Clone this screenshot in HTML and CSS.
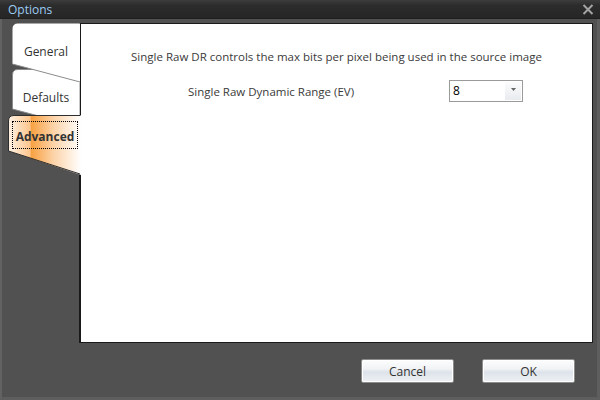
FILE: index.html
```
<!DOCTYPE html>
<html>
<head lang="en">
    <meta charset="UTF-8">
    <title>Options</title>
    <link rel="stylesheet" href="styles.css">
</head>
<body>
    <div class="window">
        <div class="titlebar">
            <span class="title">Options</span>
            <svg class="close" width="12" height="11" viewBox="0 0 12 11">
                <path d="M1.5,1 L10.5,10 M10.5,1 L1.5,10" stroke="#a3a3a3" stroke-width="2"/>
            </svg>
        </div>
        <div class="main">
            <div class="tabs">
                <div class="tab general">
                    <svg class="shape" width="68" height="59" viewBox="0 0 68 59">
                        <path d="M0.5,59 V6 Q0.5,0.5 6,0.5 H68 V59 L0.5,41 Z" fill="#fff"/>
                        <path d="M0.5,41 L68,59" stroke="#8c8c8c" fill="none"/>
                    </svg>
                    <span class="label">General</span>
                </div>
                <div class="tab defaults">
                    <svg class="shape" width="68" height="58" viewBox="0 0 68 58">
                        <path d="M0.5,40 V6 Q0.5,0.5 6,0.5 H68 V58 Z" fill="#fff" stroke="#8c8c8c"/>
                    </svg>
                    <span class="label">Defaults</span>
                </div>
                <div class="tab advanced">
                    <svg class="shape" width="73" height="60" viewBox="0 0 73 60">
                        <defs>
                            <linearGradient id="adv" x1="0" y1="0" x2="1" y2="0">
                                <stop offset="0" stop-color="#fff3e6"/>
                                <stop offset="0.3" stop-color="#fcc58c"/>
                                <stop offset="0.31" stop-color="#f8a040"/>
                                <stop offset="0.62" stop-color="#fcd3a8"/>
                                <stop offset="1" stop-color="#ffffff"/>
                            </linearGradient>
                        </defs>
                        <path d="M0.5,36 V6 Q0.5,0.5 6,0.5 H73 V60 Z" fill="url(#adv)"/>
                        <path d="M72,0.5 H6 Q0.5,0.5 0.5,6 V36 L72,59" stroke="#2e2e2e" fill="none"/>
                    </svg>
                    <span class="label focus">Advanced</span>
                </div>
            </div>
            <div class="panel">
                <p class="info">Single Raw DR controls the max bits per pixel being used in the source image</p>
                <div class="row">
                    <span class="field">Single Raw Dynamic Range (EV)</span>
                    <div class="combo">
                        <span class="value">8</span>
                        <span class="drop">
                            <svg width="5" height="3" viewBox="0 0 5 3"><path d="M0,0 H5 L2.5,3 Z" fill="#666"/></svg>
                        </span>
                    </div>
                </div>
            </div>
        </div>
        <div class="footer">
            <button class="btn">Cancel</button>
            <button class="btn">OK</button>
        </div>
    </div>
</body>
</html>
```

FILE: styles.css
```
*{
    box-sizing: border-box;
}
body{
    margin: 0;
    width: 600px;
    height: 400px;
    overflow: hidden;
    font-family: "Open Sans", "Noto Sans", sans-serif;
    font-size: 11.5px;
    color: #333;
}
.window{
    width: 600px;
    height: 400px;
    background: #515151;
    border-left: 2px solid #626262;
    border-right: 3px solid #5e5e5e;
    border-bottom: 3px solid #5e5e5e;
}
.titlebar{
    display: flex;
    justify-content: space-between;
    align-items: center;
    height: 19px;
    margin-left: -2px;
    margin-right: -3px;
    padding: 0 6px 0 8px;
    background: linear-gradient(#3c3c3c, #2c2c2c 30%, #262626);
    border-bottom: 1px solid #1f1f1f;
}
.title{
    color: #9ccbf2;
    font-size: 12px;
}
.close{
    margin-top: 1px;
}
.main{
    display: flex;
    margin-top: 4px;
    height: 320px;
}
.tabs{
    position: relative;
    z-index: 2;
    width: 78px;
    padding-left: 6px;
    display: flex;
    flex-direction: column;
}
.tab{
    position: relative;
    display: flex;
    justify-content: center;
}
.shape{
    position: absolute;
    left: 0;
    top: 0;
}
.label{
    position: relative;
    font-size: 12px;
    color: #333;
}
.general{
    z-index: 2;
    margin-left: 4px;
    width: 68px;
    height: 59px;
    padding-top: 20px;
}
.defaults{
    z-index: 1;
    margin-left: 4px;
    margin-top: -13px;
    width: 68px;
    height: 58px;
    padding-top: 20px;
}
.advanced{
    z-index: 3;
    margin-top: -12px;
    width: 73px;
    height: 60px;
    padding-top: 6px;
    justify-content: flex-start;
}
.focus{
    margin-left: 4px;
    width: 66px;
    height: 28px;
    border: 1px dotted #000;
    font-weight: bold;
    text-align: center;
    line-height: 29px;
}
.panel{
    width: 514px;
    margin-left: -1px;
    background: #fff;
    border: 1px solid #1a1a1a;
    border-left-width: 2px;
}
.info{
    margin: 25px 0 0;
    text-align: center;
    color: #3a3a3a;
}
.row{
    display: flex;
    align-items: center;
    margin-top: 16px;
    padding-left: 107px;
}
.field{
    width: 261px;
    color: #3a3a3a;
}
.combo{
    display: flex;
    justify-content: space-between;
    width: 74px;
    height: 22px;
    border: 1px solid #9a9a9a;
    background: #fff;
}
.value{
    padding-left: 3px;
    color: #000;
    font-size: 12px;
    line-height: 20px;
}
.drop{
    display: flex;
    justify-content: center;
    padding-top: 6px;
    width: 16px;
    margin: 1px;
    background: linear-gradient(#fcfcfc, #e8ebef);
}
.footer{
    display: flex;
    justify-content: flex-end;
    gap: 28px;
    padding: 16px 22px 0 0;
}
.btn{
    width: 93px;
    height: 24px;
    border: 1px solid #8d8d8d;
    border-radius: 2px;
    box-shadow: inset 0 0 0 1px #fff;
    background: linear-gradient(#fdfdfd, #f1f3f5 40%, #dde3ea 55%, #eef1f4);
    font-family: "Open Sans", "Noto Sans", sans-serif;
    font-size: 12px;
    color: #333;
    padding: 0;
}
```
